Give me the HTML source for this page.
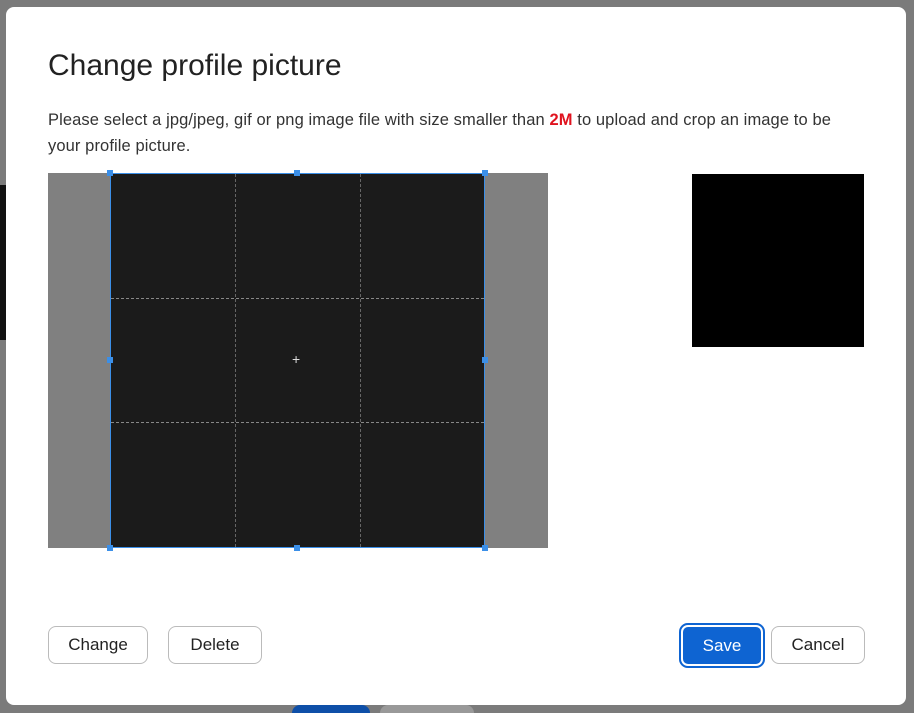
<!DOCTYPE html>
<html><head><style>
body{margin:0;width:914px;height:713px;background:#7b7b7b;position:relative;overflow:hidden;font-family:"Liberation Sans",sans-serif;}
.dlg{position:absolute;left:6px;top:7px;width:900px;height:698px;background:#fff;border-radius:8px;}
.a{position:absolute}
h1{position:absolute;left:48px;top:49px;margin:0;font-weight:normal;font-size:30px;color:#222;letter-spacing:0px}
p{position:absolute;left:48px;top:107px;margin:0;width:812px;font-size:16.5px;line-height:26px;color:#333;letter-spacing:0.1px}
.btn{position:absolute;top:626px;height:38px;border:1px solid #bbb;border-radius:8px;background:#fff;font-size:17px;color:#222;display:flex;align-items:center;justify-content:center;box-sizing:border-box}
.h{position:absolute;width:6px;height:6px;background:#3b8fe8}
</style></head><body>
<div class="a" style="left:0;top:185px;width:6px;height:155px;background:#111"></div>
<div class="a" style="left:292px;top:705px;width:78px;height:8px;background:#0e4fa8;border-radius:8px 8px 0 0"></div>
<div class="a" style="left:380px;top:705px;width:94px;height:8px;background:#999;border-radius:8px 8px 0 0"></div>
<div class="dlg"></div>
<h1>Change profile picture</h1>
<p>Please select a jpg/jpeg, gif or png image file with size smaller than <b style="color:#e0131f">2M</b> to upload and crop an image to be your profile picture.</p>
<div class="a" style="left:48px;top:173px;width:500px;height:375px;background:#808080"></div>
<div class="a" style="left:110px;top:173px;width:375px;height:375px;background:#1b1b1b;border:1px solid #3b8fe8;box-sizing:border-box"></div>
<div class="a" style="left:235px;top:174px;height:373px;border-left:1px dashed #666"></div>
<div class="a" style="left:360px;top:174px;height:373px;border-left:1px dashed #666"></div>
<div class="a" style="left:111px;top:298px;width:373px;border-top:1px dashed #888"></div>
<div class="a" style="left:111px;top:422px;width:373px;border-top:1px dashed #888"></div>
<div class="a" style="left:292px;top:351px;color:#ddd;font-size:14px">+</div>
<div class="h" style="left:107px;top:170px"></div><div class="h" style="left:294px;top:170px"></div><div class="h" style="left:482px;top:170px"></div>
<div class="h" style="left:107px;top:357px"></div><div class="h" style="left:482px;top:357px"></div>
<div class="h" style="left:107px;top:545px"></div><div class="h" style="left:294px;top:545px"></div><div class="h" style="left:482px;top:545px"></div>
<div class="a" style="left:692px;top:174px;width:172px;height:173px;background:#000"></div>
<div class="btn" style="left:48px;width:100px">Change</div>
<div class="btn" style="left:168px;width:94px">Delete</div>
<div class="btn" style="left:679px;top:623px;width:86px;height:45px;background:#0e64d2;border:none;border-radius:9px;color:#fff;box-shadow:inset 0 0 0 2px #0e64d2,inset 0 0 0 4px #fff">Save</div>
<div class="btn" style="left:771px;width:94px">Cancel</div>
</body></html>
